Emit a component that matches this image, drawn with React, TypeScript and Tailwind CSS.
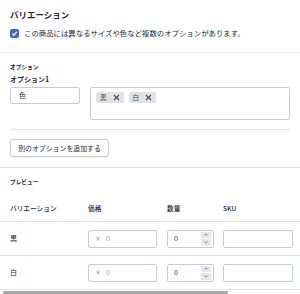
import React from 'react';

const font = { fontFamily: '"Noto Sans CJK JP", "Noto Sans", sans-serif' };

function Chip({ label }: { label: string }) {
    return (
        <span className="flex items-center gap-[6px] h-[11px] px-[4px] bg-[#dfe3e8] rounded-[2px] text-[6.5px] text-[#454f5b]">
            {label}
            <svg width="7" height="7" viewBox="0 0 7 7" className="text-[#454f5b]">
                <path d="M1 1L6 6M6 1L1 6" stroke="currentColor" strokeWidth="1.1" />
            </svg>
        </span>
    );
}

function Spinner() {
    return (
        <div className="flex flex-col gap-[1px] py-[2px] pr-[2px]">
            <span className="w-[10px] h-[6.5px] bg-[#e4e7eb] flex items-center justify-center">
                <svg width="4" height="3" viewBox="0 0 4 3"><path d="M0.5 2.5L2 1L3.5 2.5" stroke="#637381" strokeWidth="0.8" fill="none" /></svg>
            </span>
            <span className="w-[10px] h-[6.5px] bg-[#e4e7eb] flex items-center justify-center">
                <svg width="4" height="3" viewBox="0 0 4 3"><path d="M0.5 0.5L2 2L3.5 0.5" stroke="#637381" strokeWidth="0.8" fill="none" /></svg>
            </span>
        </div>
    );
}

function Row({ name }: { name: string }) {
    return (
        <div className="flex items-center h-[34px] border-b border-[#dfe3e8] text-[7px] text-[#212b36]">
            <div className="w-[88px] pl-[10px]">{name}</div>
            <div className="w-[69px] h-[18px] border border-[#c4cdd5] rounded-[2px] flex items-center pl-[7px] text-[#919eab] gap-[6px]">
                <span>¥</span><span>0</span>
            </div>
            <div className="ml-[10px] w-[47px] h-[18px] border border-[#c4cdd5] rounded-[2px] flex items-center justify-between pl-[6px]">
                <span className="text-[#212b36]">0</span>
                <Spinner />
            </div>
            <div className="ml-[9px] w-[70px] h-[18px] border border-[#c4cdd5] rounded-[2px]" />
        </div>
    );
}

export default function App() {
    return (
        <div className="w-[300px] h-[294px] bg-white overflow-hidden relative text-[#212b36]" style={font}>
            <div className="px-[10px] pt-[9px] pb-[14px] border-b border-[#e6e9ec]">
                <h2 className="text-[8.5px] leading-[10px] font-bold">バリエーション</h2>
                <label className="mt-[9px] flex items-center gap-[5px] h-[10px]">
                    <span className="w-[9px] h-[9px] rounded-[2px] bg-[#3f63d8] flex items-center justify-center">
                        <svg width="7" height="7" viewBox="0 0 8 8">
                            <path d="M1.5 4.2L3.3 6L6.6 2" stroke="white" strokeWidth="1.4" fill="none" />
                        </svg>
                    </span>
                    <span className="text-[7.4px] leading-[10px]">この商品には異なるサイズや色など複数のオプションがあります。</span>
                </label>
            </div>

            <div className="pt-[10px] pb-[10px] border-b border-[#dfe3e8]">
                <div className="px-[10px] text-[5.7px] leading-[8px] font-bold">オプション</div>
                <div className="px-[10px] mt-[4px] text-[7px] leading-[9px] font-bold">オプション1</div>
                <div className="px-[10px] mt-[3px] flex gap-[10px]">
                    <div className="w-[70px] h-[17px] border border-[#c4cdd5] rounded-[2px] flex items-center pl-[8px] text-[7px]">色</div>
                    <div className="flex-1 h-[33px] border border-[#c4cdd5] rounded-[2px] flex items-start gap-[5px] pl-[5px] pt-[4px]">
                        <Chip label="黒" />
                        <Chip label="白" />
                    </div>
                </div>
                <div className="mx-[10px] mt-[9px] border-t border-[#dfe3e8]" />
                <button className="ml-[10px] mt-[9px] h-[18px] w-[99px] border border-[#c4cdd5] rounded-[3px] text-[6.9px] bg-white shadow-[0_1px_0_rgba(22,29,37,0.05)]">
                    別のオプションを追加する
                </button>
            </div>

            <div className="px-[10px] pt-[10px] text-[5.7px] leading-[8px] font-bold">プレビュー</div>

            <div className="mt-[10px] flex items-center h-[26px] border-b border-[#dfe3e8] text-[6.7px] font-medium">
                <div className="w-[88px] pl-[10px]">バリエーション</div>
                <div className="w-[79px]">価格</div>
                <div className="w-[56px]">数量</div>
                <div>SKU</div>
            </div>
            <Row name="黒" />
            <Row name="白" />

            <div className="absolute left-[3px] bottom-0 w-[225px] h-[3px] rounded-full bg-[#a8a8a8]" />
        </div>
    );
}
